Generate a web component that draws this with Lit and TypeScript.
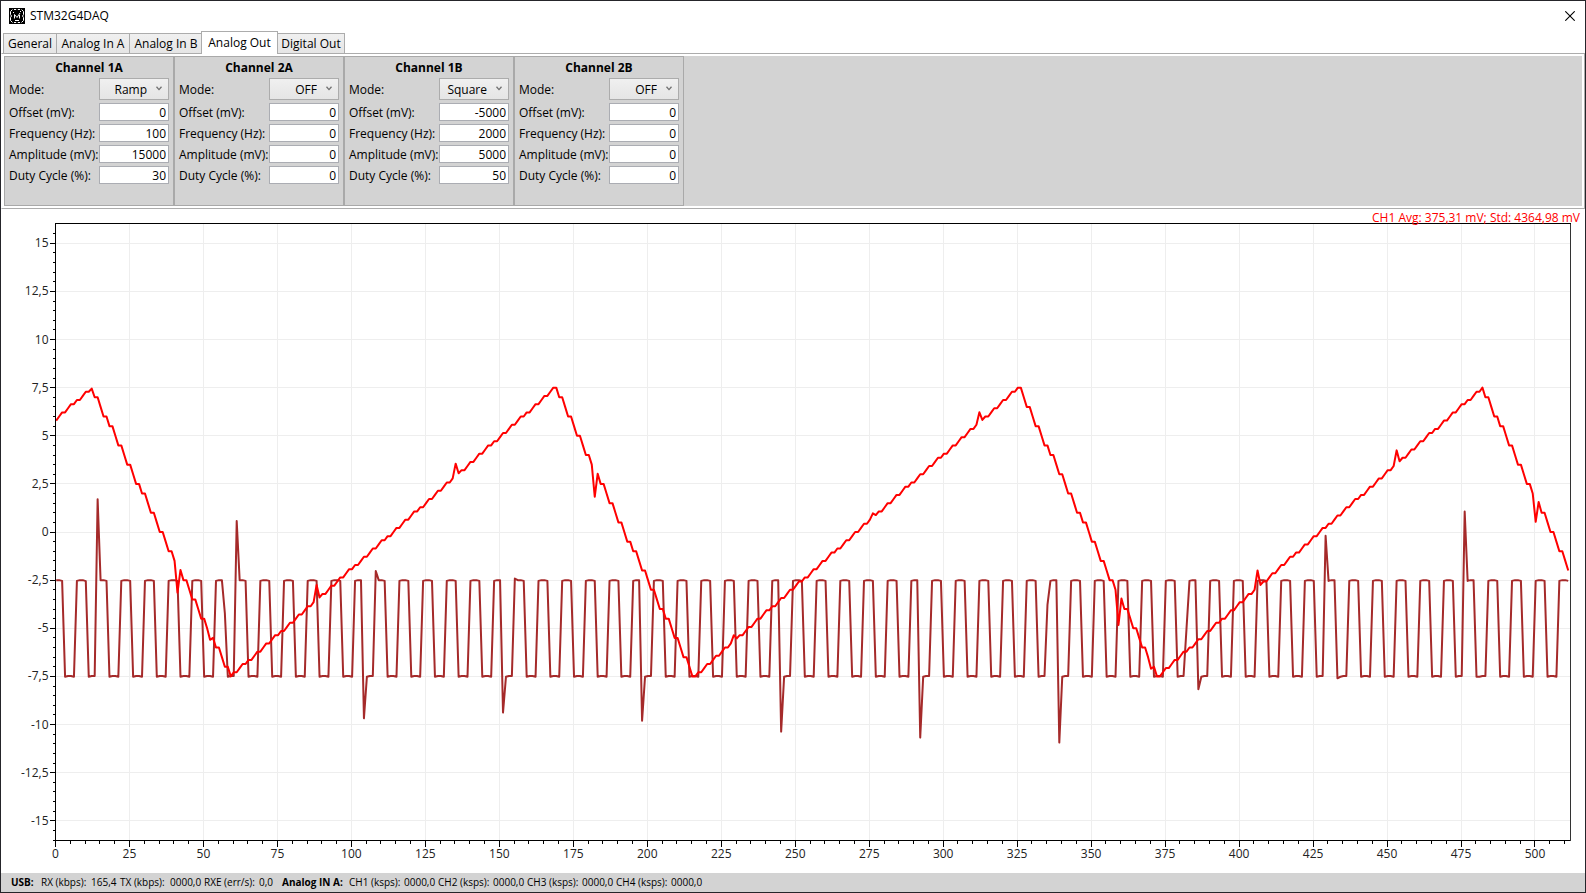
import { LitElement, html, css, svg } from "lit";
import { customElement, property, state } from "lit/decorators.js";

type Mode = "OFF" | "Ramp" | "Square";
interface Channel {
  name: string;
  mode: Mode;
  offset: number;
  frequency: number;
  amplitude: number;
  duty: number;
}

const CHANNELS: Channel[] = [
  { name: "Channel 1A", mode: "Ramp", offset: 0, frequency: 100, amplitude: 15000, duty: 30 },
  { name: "Channel 2A", mode: "OFF", offset: 0, frequency: 0, amplitude: 0, duty: 0 },
  { name: "Channel 1B", mode: "Square", offset: -5000, frequency: 2000, amplitude: 5000, duty: 50 },
  { name: "Channel 2B", mode: "OFF", offset: 0, frequency: 0, amplitude: 0, duty: 0 },
];

const SAMPLES = 512;
const GLITCH_PERIOD = 47;

/** Ramp output: 100 DAC updates per period, 30 falling and 70 rising. */
const rampGlitches: Record<number, number> = {
  12: 7.45, 41: -3.15, 42: -1.97, 52: -5.6, 88: -2.75, 89: -3.4, 135: 3.55, 136: 3.05, 182: 1.83, 183: 3.03,
  229: -5.36, 230: -5.53, 276: 0.97, 277: 0.88, 312: 6.22, 313: 5.82, 359: -4.83, 360: -3.46,
  370: -7.1, 406: -2.0, 407: -2.75, 453: 4.24, 454: 3.67, 500: 0.53, 501: 1.56,
};
const ramp = (i: number): number => {
  if (i in rampGlitches) return rampGlitches[i];
  const step = Math.floor((i - 11.22) / (GLITCH_PERIOD / 30));
  const n = ((step % 100) + 100) % 100;
  return n <= 30 ? 7.5 - n * 0.5 : -7.5 + ((n - 30) * 15) / 70;
};

/** Square output: four samples high, four low, re-aligned every 47 samples. */
const squareGlitches: Record<number, number> = {
  10: -2.55, 14: 1.7, 57: -4.22, 61: 0.57, 104: -9.68, 108: -2.03, 151: -9.38, 155: -2.42, 198: -9.8,
  245: -10.37, 292: -10.68, 335: -3.79, 339: -10.94, 382: -5, 386: -8.17, 429: -0.2, 433: -7.6, 476: 1.06,
};
const square = (i: number): number => {
  if (i in squareGlitches) return squareGlitches[i];
  const p = (((i - 14) % GLITCH_PERIOD) + GLITCH_PERIOD) % GLITCH_PERIOD;
  const high = p < 40 ? p % 8 < 4 : p < 43;
  const edge = p % 4 === 0 || p % 4 === 3;
  return high ? (edge ? -2.54 : -2.5) : edge ? -7.52 : -7.48;
};

const range = (from: number, to: number, step: number): number[] =>
  Array.from({ length: Math.floor((to - from) / step) + 1 }, (_, k) => from + k * step);
const comma = (v: number): string => String(v).replace(".", ",");

@customElement("scope-chart")
export class ScopeChart extends LitElement {
  static styles = css`
    :host { display: block; position: relative; min-width: 0; min-height: 0; overflow: hidden; }
    .canvas { display: block; width: 100%; height: 100%; }
    .grid { stroke: #eeeeee; stroke-width: 1; fill: none; }
    .axis { stroke: #000; stroke-width: 1; fill: none; }
    .frame { stroke: #333; stroke-width: 1; fill: none; }
    .crisp { shape-rendering: crispEdges; }
    .tick { font: 12px "Open Sans", "Noto Sans", sans-serif; fill: #222; }
    .trace { fill: none; stroke-width: 2; stroke-linejoin: round; }
    .ramp { stroke: #ff0000; }
    .square { stroke: #a52a2a; }
    .stats {
      position: absolute; top: 1px; right: 5px; margin: 0; color: #ff0000;
      font-size: 12px; line-height: 16px;
    }
  `;

  @property() stats = "";
  @state() private w = 0;
  @state() private h = 0;
  private observer?: ResizeObserver;

  firstUpdated() {
    this.measure();
    this.observer = new ResizeObserver(() => this.measure());
    this.observer.observe(this);
  }

  disconnectedCallback() {
    super.disconnectedCallback();
    this.observer?.disconnect();
  }

  private measure() {
    this.w = this.clientWidth;
    this.h = this.clientHeight;
  }

  private plot() {
    const left = 54.5, right = this.w - 14.5, top = 14.5, bottom = this.h - 32.5;
    const sx = (right - left) / SAMPLES;
    const sy = (bottom - top - 1) / 32;
    const x = (v: number) => left + v * sx;
    const y = (v: number) => top + 0.5 + (16 - v) * sy;
    const snap = (v: number) => Math.floor(v) + 0.5;
    const xMajor = range(0, 500, 25);
    const yMajor = range(-15, 15, 2.5);
    const gridPath =
      xMajor.map((v) => `M${snap(x(v))} ${top}V${bottom}`).join("") +
      yMajor.map((v) => `M${left} ${snap(y(v))}H${right}`).join("");
    const tickPath =
      range(0, 510, 5).map((v) => `M${snap(x(v))} ${bottom}v${v % 25 === 0 ? 6 : 3}`).join("") +
      range(-16, 15.5, 0.5).map((v) => `M${left} ${snap(y(v))}h${v % 2.5 === 0 ? -6 : -3}`).join("");
    const line = (f: (i: number) => number) =>
      Array.from({ length: SAMPLES }, (_, i) => `${(x(i) + 0.7).toFixed(2)},${y(f(i)).toFixed(2)}`).join(" ");
    return svg`
      <path class="grid crisp" d=${gridPath}></path>
      <path class="axis crisp" d=${tickPath}></path>
      <polyline class="trace square" points=${line(square)}></polyline>
      <polyline class="trace ramp" points=${line(ramp)}></polyline>
      <path class="axis crisp" d="M${right} ${top}H${left}V${bottom}H${right}"></path>
      <path class="frame crisp" d="M${right} ${top}V${bottom}"></path>
      ${xMajor.map((v) => svg`<text class="tick" text-anchor="middle" x=${x(v)} y=${bottom + 17}>${v}</text>`)}
      ${yMajor.map((v) => svg`<text class="tick" text-anchor="end" x=${left - 7} y=${y(v) + 4}>${comma(v)}</text>`)}
    `;
  }

  render() {
    return html`
      <svg class="canvas" role="img" aria-label="Sampled channel waveforms">${this.w ? this.plot() : ""}</svg>
      <p class="stats">${this.stats}</p>
    `;
  }
}

@customElement("output-channel")
export class OutputChannel extends LitElement {
  static styles = css`
    :host {
      display: block; box-sizing: border-box; width: 170px; padding: 3px 4px;
      border: 1px solid #a9a9a9; background: #d3d3d3;
    }
    .name { margin: 0 0 2px; font-size: 12px; line-height: 16px; font-weight: 700; text-align: center; }
    .fields { display: grid; grid-template-columns: 90px 70px; row-gap: 3px; align-items: center; }
    .label { padding-top: 2px; font-size: 12px; line-height: 16px; white-space: nowrap; }
    .box {
      box-sizing: border-box; width: 100%; height: 18px; margin: 0; padding: 0 2px;
      border: 1px solid #abadb3; border-radius: 0; background: #fff; color: #000;
      font: inherit; text-align: right; outline: none;
    }
    .picker { position: relative; display: block; }
    .mode {
      display: block; box-sizing: border-box; width: 100%; height: 22px; margin: 0; padding: 2px 21px 0 0;
      border: 1px solid #acacac; border-radius: 0; appearance: none;
      background: linear-gradient(#f0f0f0, #e5e5e5); color: #000; font: inherit;
      text-align: right; text-align-last: right; outline: none;
    }
    .arrow { position: absolute; right: 7px; top: 8px; pointer-events: none; }
  `;

  @property({ attribute: false }) channel!: Channel;

  render() {
    const c = this.channel;
    const rows: [string, string, number][] = [
      ["offset", "Offset (mV):", c.offset],
      ["frequency", "Frequency (Hz):", c.frequency],
      ["amplitude", "Amplitude (mV):", c.amplitude],
      ["duty", "Duty Cycle (%):", c.duty],
    ];
    return html`
      <h2 class="name">${c.name}</h2>
      <div class="fields">
        <label class="label" for="mode">Mode:</label>
        <span class="picker">
          <select class="mode" id="mode">
            ${["OFF", "Ramp", "Square"].map((m) => html`<option ?selected=${m === c.mode}>${m}</option>`)}
          </select>
          <svg class="arrow" width="6" height="5" viewBox="0 0 6 5" aria-hidden="true">
            <path d="M0.5 0.8L3 3.6L5.5 0.8" fill="none" stroke="#707070" stroke-width="1.3"></path>
          </svg>
        </span>
        ${rows.map(([id, text, value]) => html`
          <label class="label" for=${id}>${text}</label>
          <input class="box" id=${id} type="text" inputmode="numeric" .value=${String(value)} />
        `)}
      </div>
    `;
  }
}

@customElement("app-root")
export class AppRoot extends LitElement {
  static styles = css`
    :host {
      display: flex; flex-direction: column; box-sizing: border-box; height: 100vh;
      border: 1px solid #25252a; background: #fff; color: #000; overflow: hidden;
      font-family: "Open Sans", "Noto Sans", sans-serif; font-size: 12px; line-height: 16px;
    }
    .titlebar { display: flex; align-items: center; height: 30px; padding: 0 8px; flex: none; }
    .logo { flex: none; margin-right: 5px; }
    .title { margin: 0; flex: 1; font-size: 12px; line-height: 16px; font-weight: 400; }
    .close { display: flex; padding: 2px; border: 0; background: none; }
    .tabs { display: flex; align-items: flex-end; height: 22px; padding-left: 2px; flex: none; }
    .tab {
      box-sizing: border-box; height: 20px; padding: 1px 0 0; margin-right: -1px;
      border: 1px solid #acacac; border-bottom: 0; border-radius: 0;
      background: linear-gradient(#f0f0f0, #e5e5e5); color: #000;
      font: inherit; white-space: nowrap; text-align: center;
    }
    .w-general { width: 54px; }
    .w-analog { width: 74px; }
    .w-out { width: 68px; }
    .active {
      width: 77px; height: 23px; margin-left: -1px; margin-bottom: -1px; padding-bottom: 1px;
      background: #fff; z-index: 1;
    }
    .panel { display: flex; flex: none; padding: 2px; border: 1px solid #acacac; border-left-color: #fff; }
    .channels { display: flex; flex: 1; background: #d3d3d3; }
    .channel { height: 150px; }
    .chart { flex: 1; }
    .status {
      display: flex; align-items: center; flex: none; box-sizing: border-box; height: 19px;
      padding: 0 0 1px 10px; background: #d3d3d3; font-size: 10px; white-space: nowrap;
    }
    .group { font-weight: 700; }
    .c30 { width: 30px; } .c67 { width: 67px; }
    .c50 { width: 50px; } .c55 { width: 55px; }
    .c29 { width: 29px; } .c34 { width: 34px; } .c23 { width: 23px; }
  `;

  private tab(label: string, size: string, active = false) {
    return html`<button class="tab ${size}" role="tab" aria-selected=${active ? "true" : "false"}>${label}</button>`;
  }

  render() {
    return html`
      <header class="titlebar">
        <svg class="logo" width="16" height="16" viewBox="0 0 16 16" aria-hidden="true">
          <rect width="16" height="16" fill="#000"></rect>
          <path
            d="M3.5 1.5L1.5 3.5V6.5L2.5 8L1.5 9.5V12.5L3.5 14.5M12.5 1.5L14.5 3.5V6.5L13.5 8L14.5 9.5V12.5L12.5 14.5M5 1.5H7.2M8.8 1.5H11M5 14.5H7.2M8.8 14.5H11"
            fill="none" stroke="#fff" stroke-width="1"></path>
          <path d="M5.5 10.5V6.5L8 9.5L11 5M10.5 7V10.5M6 12.5H10M4 4.5H5M11 3.5H12" fill="none" stroke="#fff" stroke-width="1"></path>
        </svg>
        <h1 class="title">STM32G4DAQ</h1>
        <button class="close" aria-label="Close">
          <svg width="10" height="10" viewBox="0 0 10 10" aria-hidden="true">
            <path d="M0.3 0.3L9.7 9.7M9.7 0.3L0.3 9.7" stroke="#000" stroke-width="1.1"></path>
          </svg>
        </button>
      </header>
      <nav class="tabs" role="tablist">
        ${this.tab("General", "w-general")}
        ${this.tab("Analog In A", "w-analog")}
        ${this.tab("Analog In B", "w-analog")}
        ${this.tab("Analog Out", "active", true)}
        ${this.tab("Digital Out", "w-out")}
      </nav>
      <section class="panel">
        <div class="channels">
          ${CHANNELS.map((c) => html`<output-channel class="channel" .channel=${c}></output-channel>`)}
        </div>
      </section>
      <scope-chart class="chart" stats="CH1 Avg: 375,31 mV; Std: 4364,98 mV"></scope-chart>
      <footer class="status">
        <span class="group c30">USB:</span>
        <span class="c50">RX (kbps):</span><span class="c29">165,4</span>
        <span class="c50">TX (kbps):</span><span class="c34">0000,0</span>
        <span class="c55">RXE (err/s):</span><span class="c23">0,0</span>
        <span class="group c67">Analog IN A:</span>
        ${[1, 2, 3, 4].map((n) => html`<span class="c55">CH${n} (ksps):</span><span class="c34">0000,0</span>`)}
      </footer>
    `;
  }
}
